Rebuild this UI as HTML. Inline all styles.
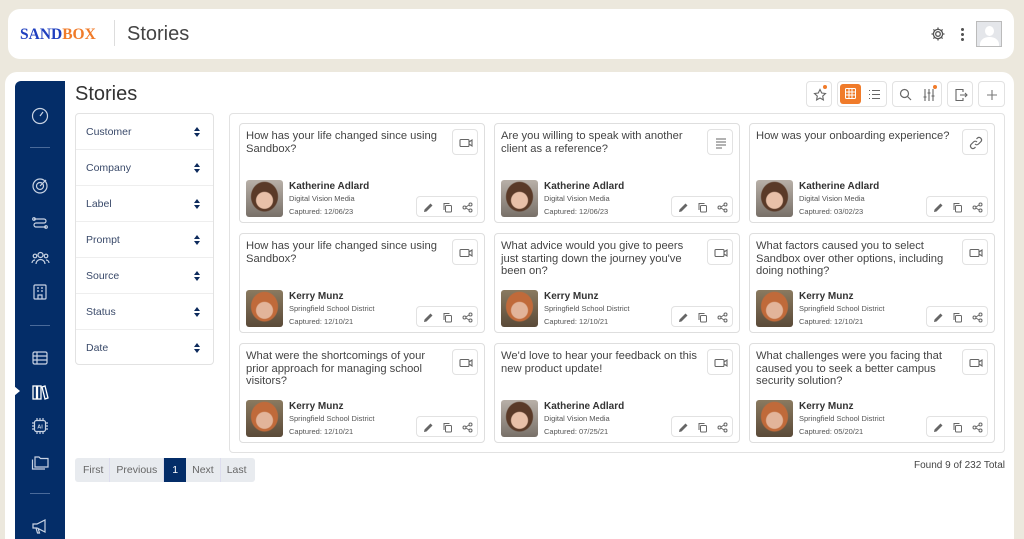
<!DOCTYPE html>
<html><head><meta charset="utf-8"><style>
*{box-sizing:border-box;margin:0;padding:0}
html,body{width:1024px;height:539px;overflow:hidden}
body{background:#ece8dd;font-family:"Liberation Sans",sans-serif;position:relative}
.hdr{position:absolute;left:8px;top:9px;width:1006px;height:50px;background:#fff;border-radius:12px}
.logo{position:absolute;left:12px;top:17px;font-family:"Liberation Serif",serif;font-weight:bold;font-size:15.5px;letter-spacing:0;color:#1f3fbf;transform:scaleX(1.0)}
.logo span{color:#f07b2a}
.sep{position:absolute;left:106px;top:11px;width:1px;height:26px;background:#ddd}
.ht{position:absolute;left:119px;top:14px;font-size:20px;color:#444}
.main{position:absolute;left:5px;top:72px;width:1009px;height:467px;background:#fff;border-radius:12px 12px 0 0}
.side{position:absolute;left:15px;top:81px;width:50px;height:458px;background:#042d68;border-radius:6px 0 0 0}
.side svg{position:absolute;left:16px}
.side .ln{position:absolute;left:15px;width:20px;height:1px;background:#4a6a9a}
.h1{position:absolute;left:75px;top:83px;font-size:20px;color:#333}
.filt{position:absolute;left:75px;top:113px;width:139px;height:252px;border:1px solid #e2e2e2;border-radius:4px;background:#fff}
.fr{height:36px;border-bottom:1px solid #eee;position:relative;font-size:10.5px;color:#3a4a6a;padding:12px 0 0 10px}
.fr:last-child{border:none}
.fr:after{content:"";position:absolute;right:13px;top:13px;border:3.5px solid transparent;border-bottom:4px solid #0d2a5c;border-top:none}
.fr:before{content:"";position:absolute;right:13px;top:19px;border:3.5px solid transparent;border-top:4px solid #0d2a5c;border-bottom:none}
.grid{position:absolute;left:229px;top:113px;width:776px;height:340px;border:1px solid #e2e2e2;border-radius:4px}
.card{position:absolute;width:246px;height:100px;border:1px solid #dedede;border-radius:4px;background:#fff}
.q{position:absolute;left:6px;top:6px;width:202px;font-size:11.2px;line-height:12.5px;color:#444}
.ib{position:absolute;right:6px;top:5px;width:26px;height:26px;border:1px solid #e2e2e2;border-radius:4px}
.ib svg{position:absolute;left:6px;top:6px}
.av{position:absolute;left:6px;top:56px;width:37px;height:37px;border-radius:3px}
.nm{position:absolute;left:49px;top:57px;font-size:10px;font-weight:bold;color:#333}
.co{position:absolute;left:49px;top:70px;font-size:7.5px;color:#555}
.dt{position:absolute;left:49px;top:83px;font-size:7.5px;color:#555}
.act{position:absolute;right:6px;top:72px;width:62px;height:21px;border:1px solid #e2e2e2;border-radius:4px}
.act svg{position:absolute;top:5px}
.tb{position:absolute;top:81px;height:26px;border:1px solid #e2e2e2;border-radius:4px;background:#fff}
.pg{position:absolute;left:75px;top:458px;height:24px;background:#e8ebef;border-radius:3px;display:flex;font-size:10.5px;color:#666}
.pg div{padding:6px 6px 0;border-right:1px solid #dde}
.found{position:absolute;right:19px;top:460px;font-size:10px;color:#444}
</style></head><body>
<div class="hdr"><div class="logo">SAND<span>BOX</span></div><div class="sep"></div><div class="ht">Stories</div>
<svg style="position:absolute;left:922px;top:17px" width="16" height="16" viewBox="0 0 16 16" fill="none" stroke="#555" stroke-width="1.3"><circle cx="8" cy="8" r="2.3"/><path d="M8 1.5v2M8 12.5v2M1.5 8h2M12.5 8h2M3.4 3.4l1.4 1.4M11.2 11.2l1.4 1.4M3.4 12.6l1.4-1.4M11.2 4.8l1.4-1.4"/><circle cx="8" cy="8" r="4.6"/></svg>
<div style="position:absolute;left:953px;top:18px;width:3px;height:14px;background:radial-gradient(circle,#555 1.4px,transparent 1.6px) 0 0/3px 5px"></div>
<div style="position:absolute;left:968px;top:12px;width:26px;height:26px;border:1px solid #bbb;background:#e4e6ea;overflow:hidden"><div style="position:absolute;left:8px;top:4px;width:9px;height:10px;border-radius:50%;background:#fff"></div><div style="position:absolute;left:3px;top:15px;width:19px;height:14px;border-radius:50% 50% 0 0;background:#fff"></div></div>
</div>
<div class="main"></div>
<div class="side">
<svg style="top:26px" width="18" height="18" viewBox="0 0 18 18" fill="none" stroke="#c9d3e3" stroke-width="1.2"><circle cx="9" cy="9" r="7.5"/><path d="M9 9l3-4M5 9h0M13 9h0M9 4.5h0"/></svg>
<div class="ln" style="top:66px"></div>
<svg style="top:96px" width="18" height="18" viewBox="0 0 18 18" fill="none" stroke="#c9d3e3" stroke-width="1.2"><circle cx="9" cy="9" r="7"/><circle cx="9" cy="9" r="3.5"/><path d="M9 9l6-6"/></svg>
<svg style="top:133px" width="18" height="18" viewBox="0 0 18 18" fill="none" stroke="#c9d3e3" stroke-width="1.2"><path d="M3 5h10a2 2 0 010 4H5a2 2 0 000 4h10"/><circle cx="3" cy="5" r="1.3"/><circle cx="15" cy="13" r="1.3"/></svg>
<svg style="top:168px" width="19" height="18" viewBox="0 0 19 18" fill="none" stroke="#c9d3e3" stroke-width="1.2"><circle cx="9.5" cy="6" r="2.5"/><path d="M5 15a4.5 4.5 0 019 0"/><circle cx="4" cy="7" r="1.8"/><circle cx="15" cy="7" r="1.8"/><path d="M1 14a3 3 0 013-3M18 14a3 3 0 00-3-3"/></svg>
<svg style="top:202px" width="18" height="18" viewBox="0 0 18 18" fill="none" stroke="#c9d3e3" stroke-width="1.2"><rect x="3" y="2" width="12" height="14" rx="1"/><path d="M6 5h2M10 5h2M6 8h2M10 8h2M7 16v-4h4v4"/></svg>
<div class="ln" style="top:244px"></div>
<svg style="top:268px" width="18" height="18" viewBox="0 0 18 18" fill="none" stroke="#c9d3e3" stroke-width="1.2"><rect x="2" y="3" width="14" height="12" rx="1.5"/><path d="M2 7h14M2 11h14M6 3v12"/></svg>
<div style="position:absolute;left:-1px;top:305px;border:5px solid transparent;border-left:6px solid #fff"></div>
<svg style="top:302px" width="18" height="18" viewBox="0 0 18 18" fill="none" stroke="#fff" stroke-width="1.3"><rect x="2" y="3" width="3.5" height="13"/><rect x="6.5" y="3" width="3.5" height="13"/><path d="M11 4l3-1 3 12-3 1z"/></svg>
<svg style="top:336px" width="18" height="18" viewBox="0 0 18 18" fill="none" stroke="#c9d3e3" stroke-width="1.2"><rect x="3.5" y="3.5" width="11" height="11" rx="2"/><path d="M6 1v2.5M9 1v2.5M12 1v2.5M6 14.5V17M9 14.5V17M12 14.5V17M1 6h2.5M1 9h2.5M1 12h2.5M14.5 6H17M14.5 9H17M14.5 12H17"/><text x="9" y="11.5" font-size="5.5" text-anchor="middle" fill="#c9d3e3" stroke="none" font-family="Liberation Sans" font-weight="bold">AI</text></svg>
<svg style="top:371px" width="18" height="18" viewBox="0 0 18 18" fill="none" stroke="#c9d3e3" stroke-width="1.2"><path d="M4 5h4l1.5 1.5H17V15H4z"/><path d="M1.5 7.5V17H14"/></svg>
<div class="ln" style="top:412px"></div>
<svg style="top:436px" width="18" height="18" viewBox="0 0 18 18" fill="none" stroke="#c9d3e3" stroke-width="1.2"><path d="M2 7h4l8-4v12l-8-4H2zM5 11l1.5 5h2L7 11"/></svg>
</div>
<div class="h1">Stories</div>
<div class="filt"><div class="fr">Customer</div><div class="fr">Company</div><div class="fr">Label</div><div class="fr">Prompt</div><div class="fr">Source</div><div class="fr">Status</div><div class="fr">Date</div></div>

<div class="tb" style="left:806px;width:26px"><svg style="position:absolute;left:6px;top:6px" width="14" height="14" viewBox="0 0 14 14" fill="none" stroke="#666" stroke-width="1.1"><path d="M7 1.5l1.7 3.5 3.8.5-2.8 2.6.7 3.8L7 10l-3.4 1.9.7-3.8L1.5 5.5l3.8-.5z"/></svg><div style="position:absolute;right:4px;top:3px;width:4px;height:4px;border-radius:50%;background:#f07b2a"></div></div>
<div class="tb" style="left:837px;width:50px"><div style="position:absolute;left:2px;top:2px;width:21px;height:20px;background:#f07b2a;border-radius:3px"><svg style="position:absolute;left:5px;top:4px" width="11" height="11" viewBox="0 0 11 11" fill="none" stroke="#fff" stroke-width="1"><rect x=".5" y=".5" width="10" height="10" rx="1"/><path d="M.5 4h10M.5 7h10M4 .5v10M7 .5v10"/></svg></div><svg style="position:absolute;left:30px;top:7px" width="12" height="11" viewBox="0 0 12 11" fill="none" stroke="#666" stroke-width="1.1"><path d="M4 1.5h8M4 5.5h8M4 9.5h8M1 1.5h1M1 5.5h1M1 9.5h1"/></svg></div>
<div class="tb" style="left:892px;width:50px"><svg style="position:absolute;left:6px;top:6px" width="13" height="13" viewBox="0 0 13 13" fill="none" stroke="#666" stroke-width="1.2"><circle cx="5.5" cy="5.5" r="4"/><path d="M8.5 8.5l3.5 3.5"/></svg><svg style="position:absolute;left:29px;top:6px" width="14" height="14" viewBox="0 0 14 14" fill="none" stroke="#666" stroke-width="1.1"><path d="M3 1v12M7 1v12M11 1v12M1.5 9h3M5.5 5h3M9.5 8h3"/></svg><div style="position:absolute;right:4px;top:3px;width:4px;height:4px;border-radius:50%;background:#f07b2a"></div></div>
<div class="tb" style="left:947px;width:26px"><svg style="position:absolute;left:6px;top:6px" width="14" height="14" viewBox="0 0 14 14" fill="none" stroke="#666" stroke-width="1.1"><path d="M9 4V1.5H2v11h7V10M6 7h7M11 5l2 2-2 2"/></svg></div>
<div class="tb" style="left:978px;width:27px"><svg style="position:absolute;left:7px;top:7px" width="12" height="12" viewBox="0 0 12 12" fill="none" stroke="#777" stroke-width="1.1"><path d="M6 1v10M1 6h10"/></svg></div>

<div class="grid"></div>
<div id="cards"></div>
<div class="pg"><div style="padding-left:8px">First</div><div>Previous</div><div style="background:#042d68;color:#fff;padding:6px 8px 0;border:none">1</div><div>Next</div><div style="border:none;padding-right:8px">Last</div></div>
<div class="found">Found 9 of 232 Total</div>
<script>
const V='<svg width="14" height="14" viewBox="0 0 14 14" fill="none" stroke="#666" stroke-width="1.1"><rect x="1" y="3.5" width="9" height="7" rx="1"/><path d="M10 6l3-2v6l-3-2"/></svg>';
const T='<svg width="14" height="14" viewBox="0 0 14 14" fill="none" stroke="#666" stroke-width="1.1"><path d="M2 3h10M2 6h10M2 9h10M2 12h6"/></svg>';
const L='<svg width="14" height="14" viewBox="0 0 14 14" fill="none" stroke="#666" stroke-width="1.2"><path d="M6 8a2.5 2.5 0 003.5 0l2.5-2.5a2.5 2.5 0 00-3.5-3.5L7.5 3M8 6a2.5 2.5 0 00-3.5 0L2 8.5A2.5 2.5 0 005.5 12l1-1"/></svg>';
const KA='radial-gradient(circle at 50% 55%,#e8c0a8 0 8px,transparent 9px),radial-gradient(ellipse at 50% 45%,#5a3a28 0 13px,transparent 14px),linear-gradient(#b8b0a8,#787068)';
const KM='radial-gradient(circle at 50% 55%,#e2b49a 0 8px,transparent 9px),radial-gradient(ellipse at 50% 45%,#c06a3a 0 13px,transparent 14px),linear-gradient(#8a7a60,#5a4a38)';
const d=[
["How has your life changed since using Sandbox?",V,0,"12/06/23"],
["Are you willing to speak with another client as a reference?",T,0,"12/06/23"],
["How was your onboarding experience?",L,0,"03/02/23"],
["How has your life changed since using Sandbox?",V,1,"12/10/21"],
["What advice would you give to peers just starting down the journey you've been on?",V,1,"12/10/21"],
["What factors caused you to select Sandbox over other options, including doing nothing?",V,1,"12/10/21"],
["What were the shortcomings of your prior approach for managing school visitors?",V,1,"12/10/21"],
["We'd love to hear your feedback on this new product update!",V,0,"07/25/21"],
["What challenges were you facing that caused you to seek a better campus security solution?",V,1,"05/20/21"]];
const acts='<svg style="left:6px" width="11" height="11" viewBox="0 0 11 11" fill="#666"><path d="M1 10l.5-2.5L7.5 1.5l2 2-6 6z"/></svg><svg style="left:25px" width="11" height="11" viewBox="0 0 11 11" fill="none" stroke="#666" stroke-width="1"><rect x="3.5" y="3.5" width="6" height="6.5" rx="1"/><path d="M2 8V1.5h5.5"/></svg><svg style="left:45px" width="11" height="11" viewBox="0 0 11 11" fill="none" stroke="#666" stroke-width="1"><circle cx="2.5" cy="5.5" r="1.5"/><circle cx="8.5" cy="2.5" r="1.5"/><circle cx="8.5" cy="8.5" r="1.5"/><path d="M4 5l3-2M4 6l3 2"/></svg>';
let h='';d.forEach((c,i)=>{const x=239+(i%3)*255,y=123+Math.floor(i/3)*110;
h+=`<div class="card" style="left:${x}px;top:${y}px"><div class="q">${c[0]}</div><div class="ib">${c[1]}</div><div class="av" style="background:${c[2]?KM:KA}"></div><div class="nm">${c[2]?'Kerry Munz':'Katherine Adlard'}</div><div class="co">${c[2]?'Springfield School District':'Digital Vision Media'}</div><div class="dt">Captured: ${c[3]}</div><div class="act">${acts}</div></div>`});
document.getElementById('cards').innerHTML=h;
</script>
</body></html>
